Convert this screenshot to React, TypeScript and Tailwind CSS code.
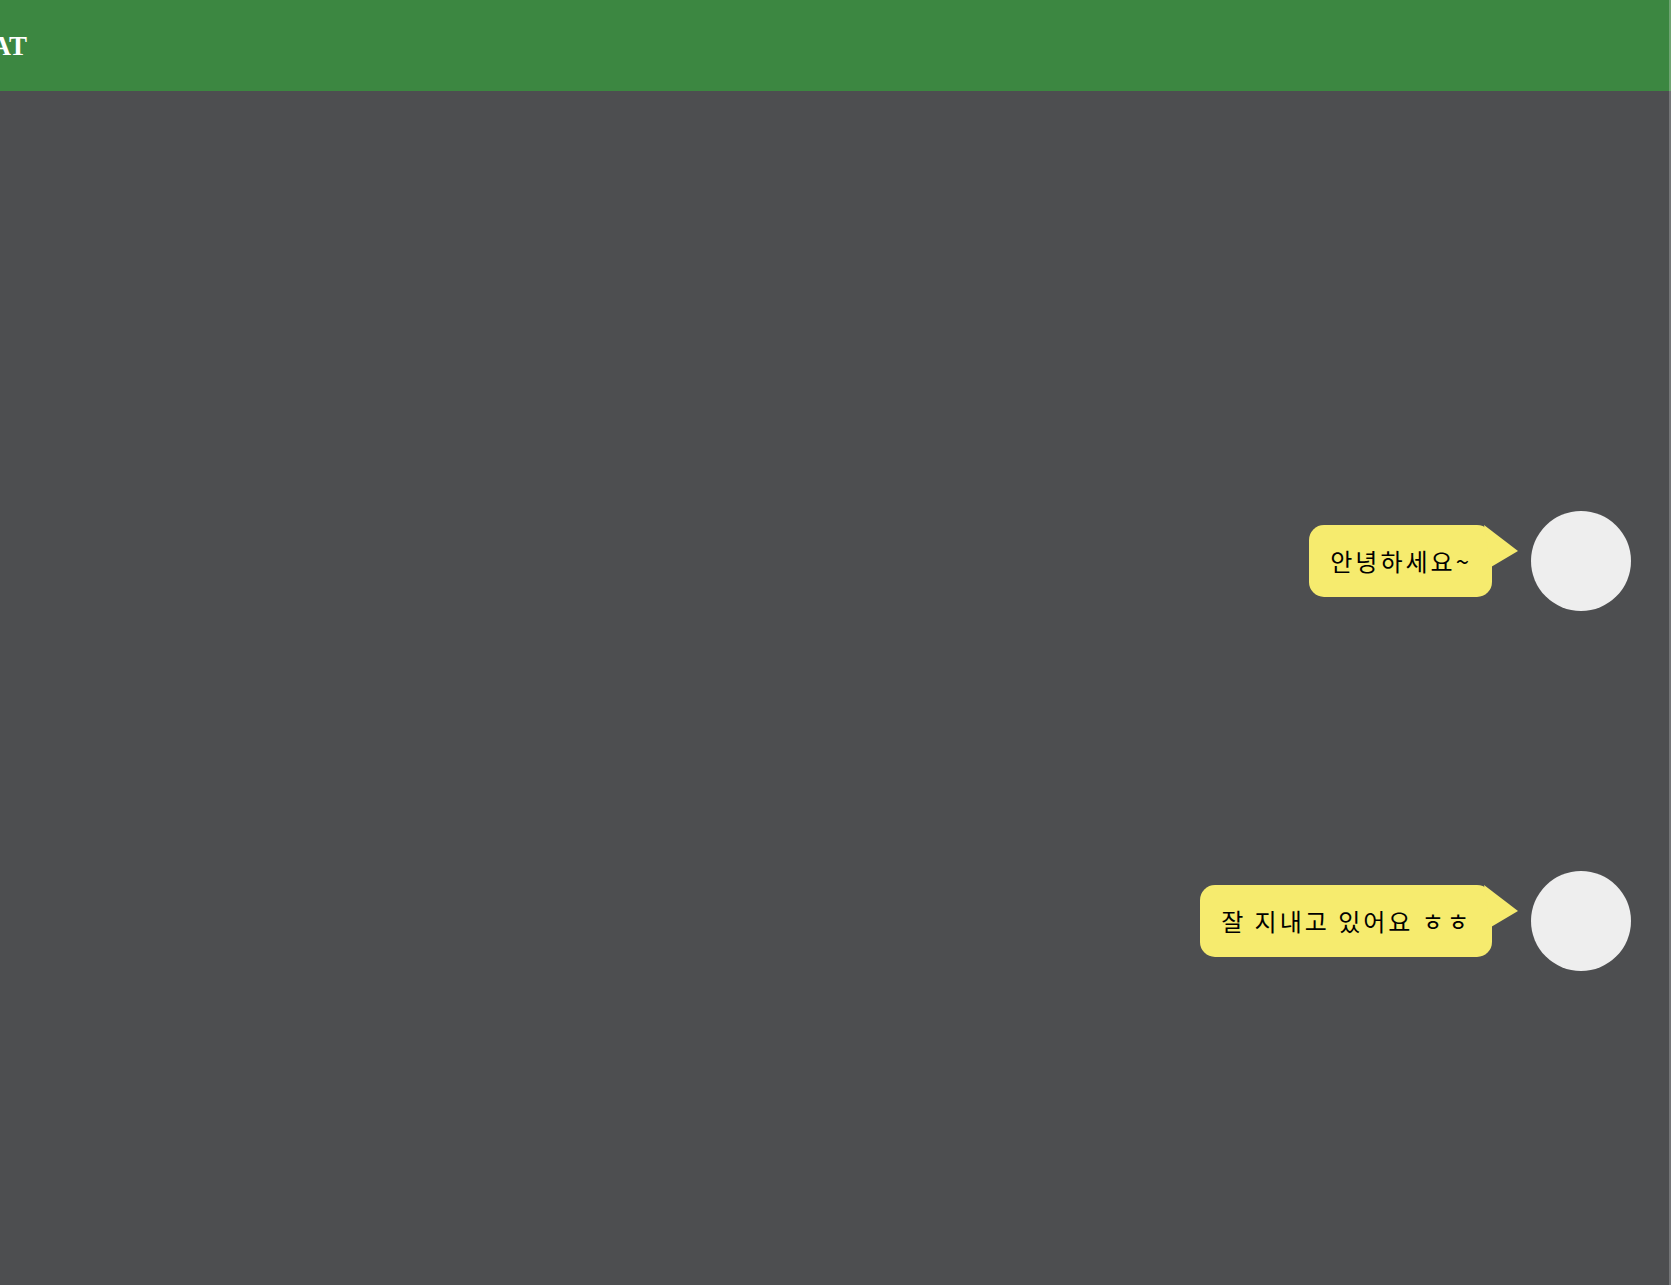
import React from "react";

function Message({ text }: { text: string }) {
  return (
    <div className="flex items-center justify-end pr-[38px]">
      <div className="relative mr-[39px] flex h-[72px] items-center rounded-[15px] bg-[#f6eb6e] pl-[21px] pr-[20px]">
        <span className="whitespace-nowrap font-['Noto_Sans_CJK_KR',sans-serif] text-[24px] leading-none tracking-[3px] text-black">
          {text}
        </span>
        <svg
          className="absolute right-[-27px] top-0"
          width="35"
          height="44"
          viewBox="0 0 35 44"
        >
          <polygon points="0,0 34,26 7,42" fill="#f6eb6e" />
        </svg>
      </div>
      <div className="h-[100px] w-[100px] shrink-0 rounded-full bg-[#eeeeee]" />
    </div>
  );
}

export default function App() {
  return (
    <div className="flex min-h-screen w-full flex-col overflow-hidden bg-[#4d4e50]">
      <header className="flex h-[91px] shrink-0 items-center overflow-hidden border-r-2 border-[#6fa472] bg-[#3c8741]">
        <h1 className="ml-[-49px] mt-[2px] whitespace-nowrap font-['Liberation_Serif',serif] text-[27px] font-bold text-white">
          CHAT
        </h1>
      </header>
      <main className="flex flex-1 flex-col border-r-2 border-[#747577] pt-[420px]">
        <Message text="안녕하세요~" />
        <div className="h-[260px]" />
        <Message text="잘 지내고 있어요 ㅎㅎ" />
      </main>
    </div>
  );
}
